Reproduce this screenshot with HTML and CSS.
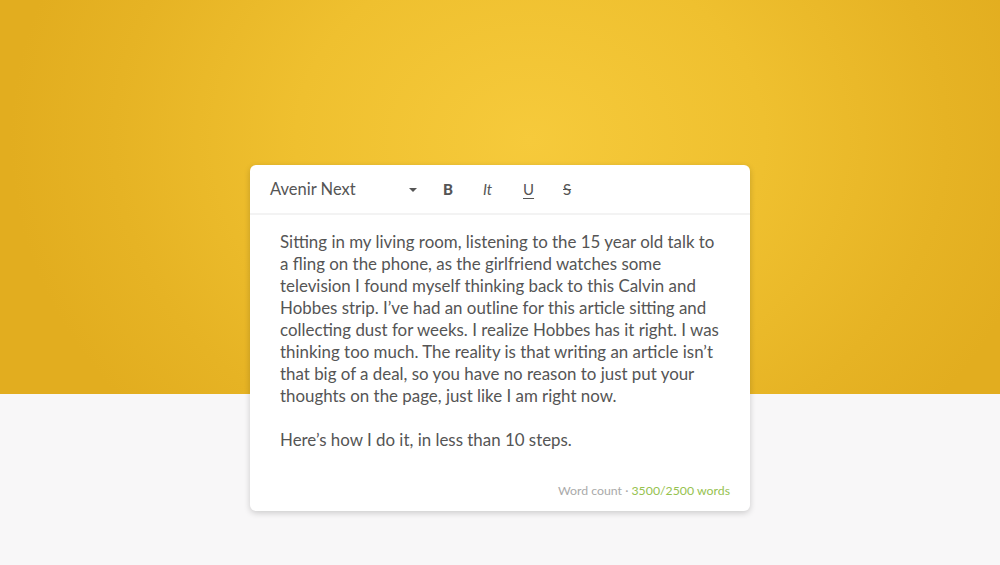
FILE: index.html
```html
<!DOCTYPE html>
<html>
<head>
<meta charset="utf-8">
<link rel="stylesheet" href="styles.css">
</head>
<body>
<div class="hero"></div>
<div class="stage">
  <div class="editor">
    <div class="toolbar">
      <div class="font-select">
        <span class="font-name">Avenir Next</span>
        <span class="caret"></span>
      </div>
      <button class="tool tool-b">B</button>
      <button class="tool tool-i">It</button>
      <button class="tool tool-u">U</button>
      <button class="tool tool-s">S</button>
    </div>
    <div class="content">
      <p>Sitting in my living room, listening to the 15 year old talk to a fling on the phone, as the girlfriend watches some television I found myself thinking back to this Calvin and Hobbes strip. I’ve had an outline for this article sitting and collecting dust for weeks. I realize Hobbes has it right. I was thinking too much. The reality is that writing an article isn’t that big of a deal, so you have no reason to just put your thoughts on the page, just like I am right now.</p>
      <p>Here’s how I do it, in less than 10 steps.</p>
    </div>
    <div class="footer">Word count · <span class="count">3500/2500 words</span></div>
  </div>
</div>
</body>
</html>
```

FILE: styles.css
```css
html, body {
  margin: 0;
  padding: 0;
}
body {
  width: 1000px;
  height: 565px;
  background: #f8f7f8;
  font-family: Lato, "Open Sans", sans-serif;
  position: relative;
  overflow: hidden;
}
.hero {
  height: 394px;
  background: radial-gradient(ellipse 520px 420px at 530px 140px, #f6ca3b 0%, #efc02f 45%, #e6b324 80%, #e2ad1f 100%);
}
.stage {
  position: absolute;
  top: 165px;
  left: 0;
  width: 1000px;
  display: flex;
  justify-content: center;
}
.editor {
  width: 500px;
  background: #fff;
  border-radius: 6px;
  box-shadow: 0 2px 6px rgba(0,0,0,0.18);
}
.toolbar {
  height: 50px;
  display: flex;
  align-items: center;
  padding: 0 20px;
  border-bottom: 2px solid #f3f3f3;
  box-sizing: border-box;
}
.font-select {
  width: 147px;
  display: flex;
  align-items: center;
  justify-content: space-between;
  color: #555;
  font-size: 16.5px;
  margin-right: 26px;
}
.caret {
  width: 0;
  height: 0;
  border-left: 4px solid transparent;
  border-right: 4px solid transparent;
  border-top: 4px solid #555;
  margin-top: 1px;
}
.tool {
  border: none;
  background: none;
  padding: 0;
  font-family: Lato, sans-serif;
  font-size: 15px;
  color: #555;
  width: 40px;
  text-align: left;
}
.tool-b { font-weight: 900; }
.tool-i { font-style: italic; }
.tool-u { text-decoration: underline; text-underline-offset: 3px; }
.tool-s { text-decoration: line-through; }
.content {
  padding: 16px 28px 10px 30px;
  color: #555;
  font-size: 16.9px;
  line-height: 22px;
}
.content p {
  margin: 0 0 22px 0;
}
.content p:last-child {
  margin-bottom: 22px;
}
.footer {
  text-align: right;
  padding: 0 20px 13px 0;
  font-size: 12.3px;
  color: #aaa;
}
.count {
  color: #96c24f;
}
```
